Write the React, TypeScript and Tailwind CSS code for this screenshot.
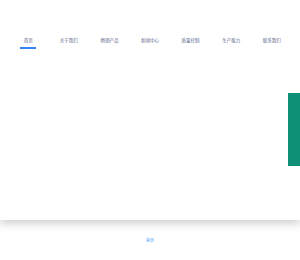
const navItems = ["首页", "关于我们", "畅销产品", "新闻中心", "质量控制", "生产能力", "联系我们"]

export default function App() {
  return (
    <div className="relative w-[300px] h-[260px] bg-white overflow-hidden" style={{ fontFamily: '"Noto Sans CJK SC", "Noto Sans", sans-serif' }}>
      <div className="relative z-10 h-[220px] bg-white shadow-[0_4px_8px_rgba(0,0,0,0.18)]">
        <nav className="flex px-[8px] pt-[36px]">
          {navItems.map((item, i) => (
            <div key={item} className="flex-1 flex flex-col items-center">
              <span className="text-[4.5px] leading-[8px] text-[#5a6488]">{item}</span>
              {i === 0 ? (
                <span className="mt-[3px] w-[16px] h-[1.5px] bg-[#3b82f6]" />
              ) : (
                <span className="mt-[3px] h-[1.5px]" />
              )}
            </div>
          ))}
        </nav>
      </div>
      <div className="flex justify-center pt-[17px]">
        <span className="text-[4px] leading-[6px] text-[#3d9bff]">首页</span>
      </div>
      <div className="absolute right-0 top-[93px] w-[12px] h-[73px] bg-[#0e9076] z-20" />
    </div>
  )
}
